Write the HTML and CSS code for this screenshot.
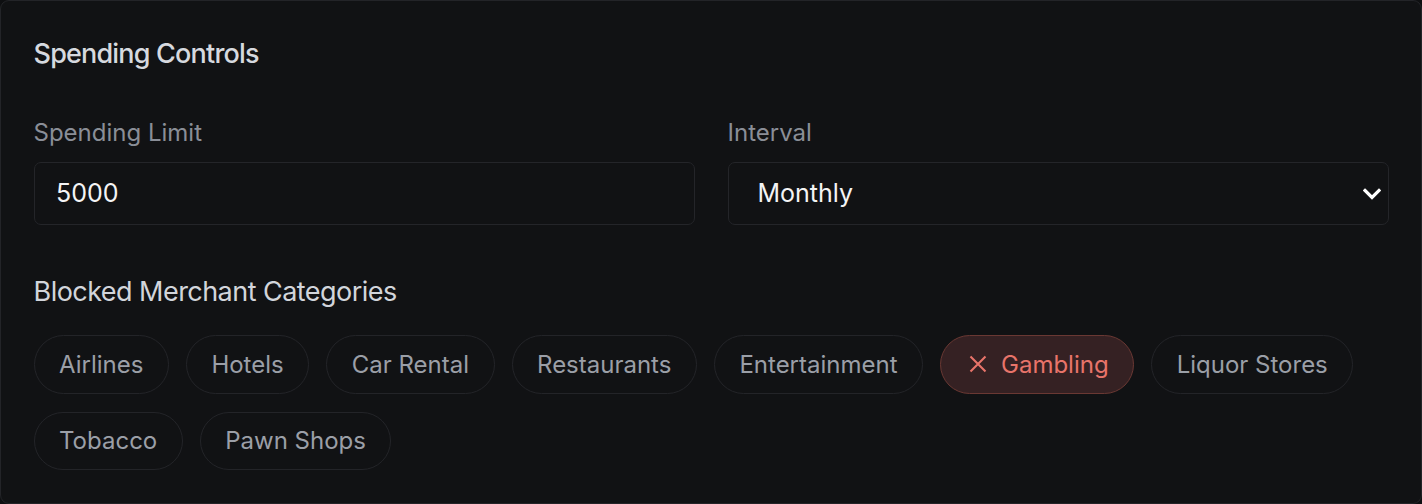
FILE: index.html
```html
<!DOCTYPE html>
<html lang="en">
<head>
<meta charset="utf-8">
<title>Spending Controls</title>
<link rel="stylesheet" href="styles.css">
</head>
<body>
<section class="card">
  <h2 class="title">Spending Controls</h2>
  <div class="fields">
    <div class="field">
      <label class="label" for="limit">Spending Limit</label>
      <input id="limit" class="input" type="text" value="5000">
    </div>
    <div class="field">
      <label class="label" for="interval">Interval</label>
      <div class="select-wrap">
        <select id="interval" class="select">
          <option>Monthly</option>
          <option>Weekly</option>
          <option>Daily</option>
        </select>
        <svg class="chevron" width="18" height="12" viewBox="0 0 18 12" aria-hidden="true"><path d="M2 2.5 L9 9.5 L16 2.5" fill="none" stroke="#ffffff" stroke-width="3.2" stroke-linecap="square"/></svg>
      </div>
    </div>
  </div>
  <h3 class="subtitle">Blocked Merchant Categories</h3>
  <div class="chips">
    <button class="chip">Airlines</button>
    <button class="chip">Hotels</button>
    <button class="chip">Car Rental</button>
    <button class="chip">Restaurants</button>
    <button class="chip">Entertainment</button>
    <button class="chip chip-blocked"><svg class="x" width="18" height="18" viewBox="0 0 18 18" aria-hidden="true"><path d="M1.5 1.5 L16.5 16.5 M16.5 1.5 L1.5 16.5" stroke="#e8746a" stroke-width="2.1" fill="none"/></svg>Gambling</button>
    <button class="chip">Liquor Stores</button>
    <button class="chip">Tobacco</button>
    <button class="chip">Pawn Shops</button>
  </div>
</section>
</body>
</html>
```

FILE: styles.css
```css
* { box-sizing: border-box; }
html, body { margin: 0; padding: 0; background: #0e0f11; }
body {
  font-family: Inter, "Noto Sans", "Liberation Sans", sans-serif;
  width: 1422px;
  height: 504px;
}
.card {
  width: 1422px;
  height: 504px;
  background: #111214;
  border: 1.5px solid #232428;
  border-radius: 9px;
  padding: 31.5px 32.5px 32px 32.5px;
}
.title {
  margin: 0;
  font-size: 27px;
  line-height: 42px;
  font-weight: 500;
  letter-spacing: -0.03em;
  color: #d6d9df;
}
.fields {
  display: grid;
  grid-template-columns: 1fr 1fr;
  column-gap: 33px;
  margin-top: 40px;
}
.field { display: flex; flex-direction: column; gap: 11px; }
.label {
  font-size: 24px;
  line-height: 36px;
  font-weight: 400;
  color: #8a8e97;
}
.input, .select {
  width: 100%;
  height: 63.5px;
  background: #111214;
  border: 1.5px solid #242529;
  border-radius: 7px;
  color: #f4f4f5;
  font-family: inherit;
  font-size: 25px;
  outline: none;
}
.input { padding: 0 21.5px; }
.select-wrap { position: relative; }
.select {
  appearance: none;
  -webkit-appearance: none;
  padding: 0 60px 0 29px;
}
.chevron {
  position: absolute;
  right: 8px;
  top: 26px;
  pointer-events: none;
}
.subtitle {
  margin: 46px 0 0;
  font-size: 27px;
  line-height: 42px;
  font-weight: 400;
  letter-spacing: -0.02em;
  color: #d2d5db;
}
.chips {
  display: flex;
  flex-wrap: wrap;
  gap: 18px 17px;
  margin-top: 22px;
}
.chip {
  display: inline-flex;
  align-items: center;
  height: 58.5px;
  padding: 0 24.5px;
  background: transparent;
  border: 1.5px solid #232428;
  border-radius: 30px;
  font-family: inherit;
  font-size: 24px;
  color: #9b9fa7;
}
.chip-blocked {
  background: #352123;
  border-color: #6a3833;
  color: #e8746a;
  padding-left: 28px;
  padding-right: 24.5px;
}
.x { margin-right: 14px; }
```
